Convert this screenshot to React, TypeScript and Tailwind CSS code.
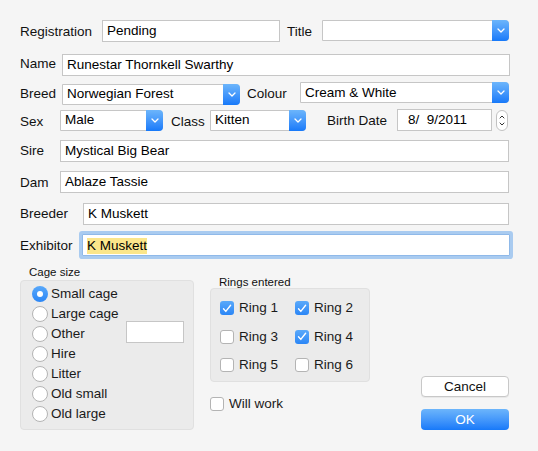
import React from 'react';

const Chevron: React.FC = () => (
  <svg width="8" height="5" viewBox="0 0 8 5" fill="none">
    <path d="M1 1l3 3 3-3" stroke="white" strokeWidth={1.3} strokeLinecap="round" strokeLinejoin="round" />
  </svg>
);

const TextField: React.FC<{ value?: string; className?: string }> = ({ value = '', className = '' }) => (
  <div
    className={`flex items-center bg-white border border-[#c6c6c6] pl-[4px] pt-[1px] text-[13.5px] text-black whitespace-nowrap overflow-hidden ${className}`}
  >
    {value}
  </div>
);

const Popup: React.FC<{ value?: string; className?: string }> = ({ value = '', className = '' }) => (
  <div className={`flex bg-white border border-[#c6c6c6] rounded-r-[4px] text-[13.5px] text-black ${className}`}>
    <div className="flex-1 flex items-center pl-[4px] pt-[1px] whitespace-nowrap overflow-hidden">{value}</div>
    <div className="w-[17px] -my-px -mr-px flex items-center justify-center rounded-r-[4px] bg-gradient-to-b from-[#6cb5fb] to-[#1679f9]">
      <Chevron />
    </div>
  </div>
);

const Radio: React.FC<{ checked?: boolean; label: string }> = ({ checked, label }) => (
  <div className="flex items-center h-[20px]">
    {checked ? (
      <div className="w-[16px] h-[16px] rounded-full bg-gradient-to-b from-[#58a8fa] to-[#2a86f6] flex items-center justify-center">
        <div className="w-[6px] h-[6px] rounded-full bg-white" />
      </div>
    ) : (
      <div className="w-[16px] h-[16px] rounded-full bg-white border border-[#b4b4b4]" />
    )}
    <span className="ml-[3px] text-[13.5px] text-[#1a1a1a]">{label}</span>
  </div>
);

const Check: React.FC<{ checked?: boolean; label: string; className?: string }> = ({ checked, label, className = '' }) => (
  <div className={`flex items-center ${className}`}>
    {checked ? (
      <div className="w-[14px] h-[14px] rounded-[3px] bg-gradient-to-b from-[#5aa9fa] to-[#2a86f6] flex items-center justify-center">
        <svg width="10" height="9" viewBox="0 0 10 9" fill="none">
          <path d="M1.5 4.8l2.3 2.6L8.6 1.3" stroke="white" strokeWidth={1.4} strokeLinecap="round" strokeLinejoin="round" />
        </svg>
      </div>
    ) : (
      <div className="w-[14px] h-[14px] rounded-[3px] bg-white border border-[#b4b4b4]" />
    )}
    <span className="ml-[5px] text-[13.5px] text-[#1a1a1a]">{label}</span>
  </div>
);

const Label: React.FC<{ children: React.ReactNode; className?: string }> = ({ children, className = '' }) => (
  <span className={`shrink-0 text-[13.5px] text-[#111] whitespace-nowrap ${className}`}>{children}</span>
);

export default function App() {
  return (
    <div
      className="w-[538px] h-[451px] bg-[#f5f5f5] pl-[20px] pt-[20px] overflow-hidden"
      style={{ fontFamily: '"Liberation Sans", Arial, sans-serif' }}
    >
      {/* Registration / Title */}
      <div className="flex items-center h-[22px]">
        <Label className="w-[82px] mt-[2px]">Registration</Label>
        <TextField value="Pending" className="w-[178px] h-[22px]" />
        <Label className="ml-[7px] w-[35px] mt-[2px]">Title</Label>
        <Popup className="w-[187px] h-[21px] -mt-[2px]" />
      </div>

      {/* Name */}
      <div className="flex items-center h-[22px] mt-[12px]">
        <Label className="w-[42px] -mt-[1px]">Name</Label>
        <TextField value="Runestar Thornkell Swarthy" className="w-[448px] h-[22px]" />
      </div>

      {/* Breed / Colour */}
      <div className="flex items-center h-[22px] mt-[7px]">
        <Label className="w-[42px] mt-[1px]">Breed</Label>
        <Popup value="Norwegian Forest" className="w-[178px] h-[21px]" />
        <Label className="ml-[7px] w-[53px] mt-[1px]">Colour</Label>
        <Popup value="Cream & White" className="w-[209px] h-[21px] -mt-[3px]" />
      </div>

      {/* Sex / Class / Birth Date */}
      <div className="flex items-center h-[22px] mt-[4px]">
        <Label className="w-[40px] mt-[4px]">Sex</Label>
        <Popup value="Male" className="w-[103px] h-[21px]" />
        <Label className="ml-[8px] w-[39px] mt-[4px]">Class</Label>
        <Popup value="Kitten" className="w-[96px] h-[21px]" />
        <Label className="ml-[21px] w-[70px] mt-[2px]">Birth Date</Label>
        <TextField value="8/  9/2011" className="w-[95px] h-[22px] pl-[10px] whitespace-pre" />
        <div className="ml-[4px] w-[12px] h-[21px] rounded-full bg-white border border-[#c2c2c2] flex flex-col items-center justify-center gap-[3px]">
          <svg width="6" height="4" viewBox="0 0 6 4" fill="none">
            <path d="M1 3l2-2 2 2" stroke="#333" strokeWidth={1} strokeLinecap="round" />
          </svg>
          <svg width="6" height="4" viewBox="0 0 6 4" fill="none">
            <path d="M1 1l2 2 2-2" stroke="#333" strokeWidth={1} strokeLinecap="round" />
          </svg>
        </div>
      </div>

      {/* Sire */}
      <div className="flex items-center h-[22px] mt-[9px]">
        <Label className="w-[40px] mt-[1px]">Sire</Label>
        <TextField value="Mystical Big Bear" className="w-[449px] h-[22px]" />
      </div>

      {/* Dam */}
      <div className="flex items-center h-[22px] mt-[9px]">
        <Label className="w-[40px] mt-[2px]">Dam</Label>
        <TextField value="Ablaze Tassie" className="w-[449px] h-[22px]" />
      </div>

      {/* Breeder */}
      <div className="flex items-center h-[22px] mt-[10px]">
        <Label className="w-[63px]">Breeder</Label>
        <TextField value="K Muskett" className="w-[426px] h-[22px]" />
      </div>

      {/* Exhibitor */}
      <div className="flex items-center h-[22px] mt-[9px]">
        <Label className="w-[62px] mt-[2px]">Exhibitor</Label>
        <div className="w-[428px] h-[22px] flex items-center bg-white border border-[#8fb9e9] ring-[3px] ring-[#a9cbf0] rounded-[1px] pl-[4px] pt-[1px] text-[13.5px] text-black">
          <span className="bg-[#fbe68b] leading-[16px]">K Muskett</span>
        </div>
      </div>

      {/* Bottom section */}
      <div className="flex mt-[9px]">
        {/* Cage size */}
        <div className="w-[174px]">
          <div className="pl-[9px] text-[11.5px] text-[#111] h-[14px] leading-[14px]">Cage size</div>
          <div className="mt-[1px] h-[150px] rounded-[4px] bg-[#ebebeb] border border-[#e0e0e0] pl-[11px] pt-[3px] relative">
            <Radio checked label="Small cage" />
            <Radio label="Large cage" />
            <Radio label="Other" />
            <Radio label="Hire" />
            <Radio label="Litter" />
            <Radio label="Old small" />
            <Radio label="Old large" />
            <div className="absolute left-[105px] top-[40px] w-[58px] h-[22px] bg-white border border-[#c6c6c6]" />
          </div>
        </div>

        {/* Rings entered */}
        <div className="ml-[16px] w-[160px] pt-[10px]">
          <div className="pl-[9px] text-[11.5px] text-[#111] h-[14px] leading-[14px]">Rings entered</div>
          <div className="mt-[-1px] h-[94px] rounded-[4px] bg-[#ebebeb] border border-[#e0e0e0] pl-[9px] pt-[5px] grid grid-cols-[75px_75px] auto-rows-[28.5px]">
            <Check checked label="Ring 1" />
            <Check checked label="Ring 2" />
            <Check label="Ring 3" />
            <Check checked label="Ring 4" />
            <Check label="Ring 5" />
            <Check label="Ring 6" />
          </div>
          <Check label="Will work" className="mt-[15px] h-[14px]" />
        </div>

        {/* Buttons */}
        <div className="ml-[51px] flex flex-col justify-end">
          <button className="w-[88px] h-[21px] rounded-[4px] bg-white border border-[#c8c8c8] text-[13.5px] text-[#111] leading-none shadow-[0_1px_0_rgba(0,0,0,0.05)]">
            Cancel
          </button>
          <button className="mt-[12px] w-[88px] h-[21px] rounded-[4px] bg-gradient-to-b from-[#6cb5fb] to-[#1679f9] text-[13.5px] text-white leading-none">
            OK
          </button>
        </div>
      </div>
    </div>
  );
}
